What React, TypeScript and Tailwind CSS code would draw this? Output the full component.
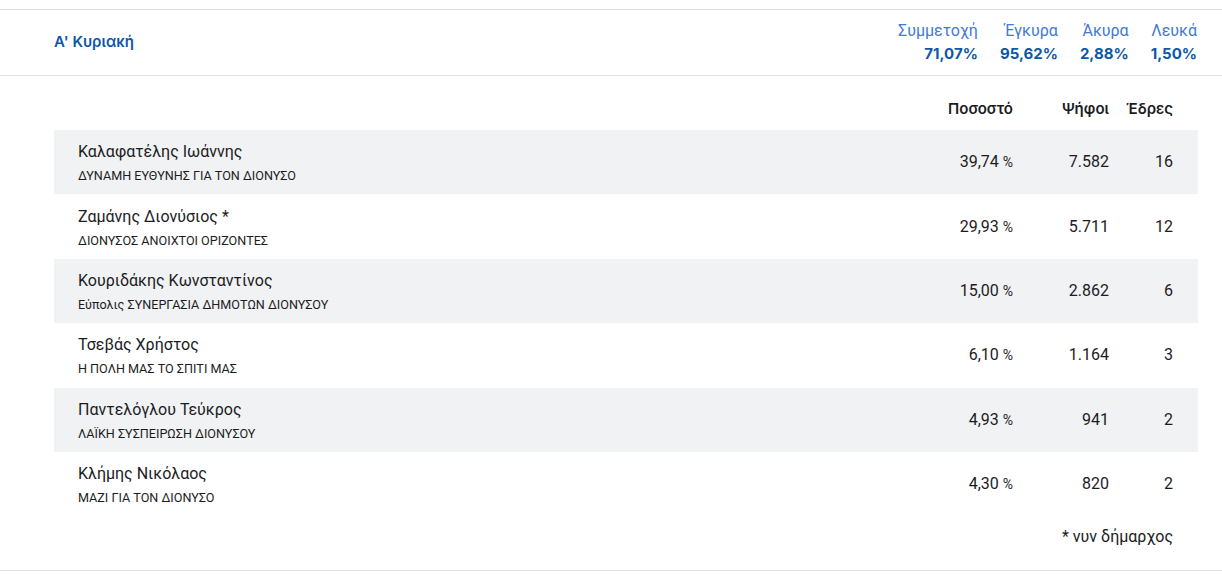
import React from "react";

const rows = [
  { name: "Καλαφατέλης Ιωάννης", party: "ΔΥΝΑΜΗ ΕΥΘΥΝΗΣ ΓΙΑ ΤΟΝ ΔΙΟΝΥΣΟ", pct: "39,74", votes: "7.582", seats: "16" },
  { name: "Ζαμάνης Διονύσιος *", party: "ΔΙΟΝΥΣΟΣ ΑΝΟΙΧΤΟΙ ΟΡΙΖΟΝΤΕΣ", pct: "29,93", votes: "5.711", seats: "12" },
  { name: "Κουριδάκης Κωνσταντίνος", party: "Εύπολις ΣΥΝΕΡΓΑΣΙΑ ΔΗΜΟΤΩΝ ΔΙΟΝΥΣΟΥ", pct: "15,00", votes: "2.862", seats: "6" },
  { name: "Τσεβάς Χρήστος", party: "Η ΠΟΛΗ ΜΑΣ ΤΟ ΣΠΙΤΙ ΜΑΣ", pct: "6,10", votes: "1.164", seats: "3" },
  { name: "Παντελόγλου Τεύκρος", party: "ΛΑΪΚΗ ΣΥΣΠΕΙΡΩΣΗ ΔΙΟΝΥΣΟΥ", pct: "4,93", votes: "941", seats: "2" },
  { name: "Κλήμης Νικόλαος", party: "ΜΑΖΙ ΓΙΑ ΤΟΝ ΔΙΟΝΥΣΟ", pct: "4,30", votes: "820", seats: "2" },
];

const stats = [
  { label: "Συμμετοχή", value: "71,07%" },
  { label: "Έγκυρα", value: "95,62%" },
  { label: "Άκυρα", value: "2,88%" },
  { label: "Λευκά", value: "1,50%" },
];

export default function App() {
  return (
    <div className="min-h-[576px] bg-white pt-[9px] text-[#1c1c1e] font-[Roboto,'Noto_Sans',sans-serif]">
      <div className="border-y border-[#dfe1e5]">
        <div className="flex items-center justify-between border-b border-[#dfe1e5] py-[10px] pl-[54px] pr-[25px]">
          <div className="font-[Inter,sans-serif] text-[15px] font-semibold text-[#0c57a8]">Α' Κυριακή</div>
          <div className="flex gap-[22px]">
            {stats.map((s) => (
              <div key={s.label} className="flex flex-col items-end">
                <div className="text-[16px] leading-[22px] text-[#3f7ad6]">{s.label}</div>
                <div className="font-[Inter,sans-serif] text-[15px] font-bold leading-[23px] text-[#0c57a8]">{s.value}</div>
              </div>
            ))}
          </div>
        </div>
        <div className="px-[24px] pt-[21px] pb-[21px]">
          <div className="ml-[30px] mr-[25px] mb-[9px] flex h-6 items-center font-[Inter,sans-serif] text-[15px] font-semibold leading-6">
            <div className="flex-1" />
            <div className="w-[120px] text-right">Ποσοστό</div>
            <div className="w-[96px] text-right">Ψήφοι</div>
            <div className="w-[64px] text-right">Έδρες</div>
          </div>
          <div className="ml-[30px]">
            {rows.map((r, i) => (
              <div key={r.name} className={`flex h-[64.4px] items-center pl-[24px] pr-[25px] ${i % 2 === 0 ? "bg-[#f1f2f4]" : "bg-white"}`}>
                <div className="flex flex-1 flex-col">
                  <div className="text-[16px] leading-6">{r.name}</div>
                  <div className="mt-1 text-[12.6px] leading-4">{r.party}</div>
                </div>
                <div className="w-[120px] text-right text-[16px]">
                  {r.pct} <span className="text-[14px]">%</span>
                </div>
                <div className="w-[96px] text-right text-[16px]">{r.votes}</div>
                <div className="w-[64px] text-right text-[16px]">{r.seats}</div>
              </div>
            ))}
          </div>
          <div className="mr-[25px] mt-[9px] text-right text-[16px] leading-6">* νυν δήμαρχος</div>
        </div>
      </div>
    </div>
  );
}
